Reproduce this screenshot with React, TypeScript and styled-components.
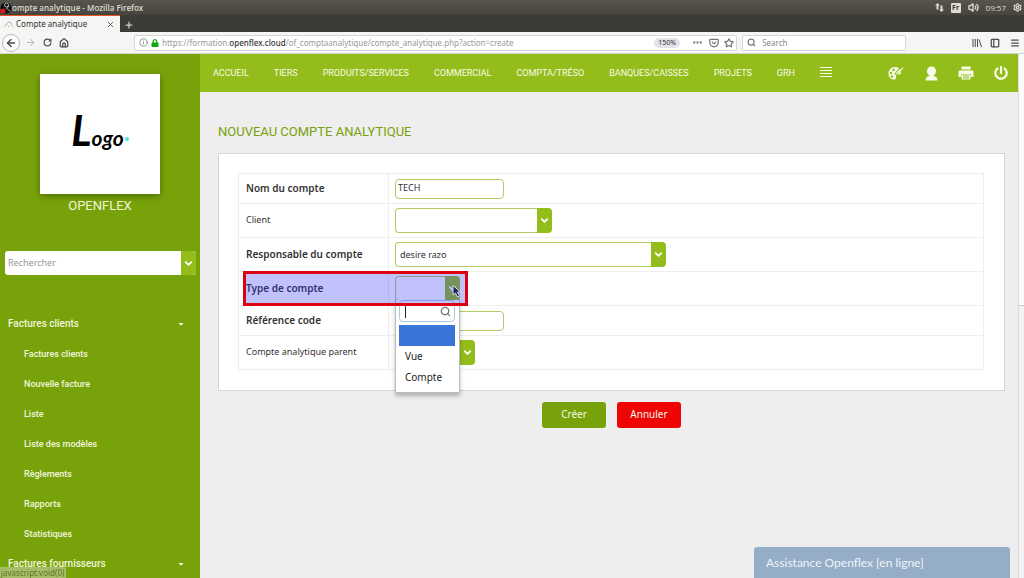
import React from 'react';
import styled, { createGlobalStyle } from 'styled-components';
import {
  ArrowLeft, ArrowRight, RotateCw, House, Info, Search, Star, Ellipsis, Menu, X, Plus, Volume2, PanelLeft, Settings, ChevronDown, Pocket,
} from 'lucide-react';
import { FaPowerOff, FaLock, FaCaretDown } from 'react-icons/fa';

const c = {
  side: '#78a20a',
  lime: '#93bd1a',
  line: '#eeeeee',
  border: '#b1cc66',
  page: '#eeeeee',
};
const ui = '"Noto Sans", "Open Sans", sans-serif';

const GlobalStyle = createGlobalStyle`
  *, *::before, *::after { box-sizing: border-box; }
  body { margin: 0; font: 10px/14px ${ui}; color: #333; overflow: hidden; }
  button, input, select { font: inherit; color: inherit; margin: 0; padding: 0; border: 0; background: none; min-width: 0; }
  a { color: inherit; text-decoration: none; }
  ul { list-style: none; margin: 0; padding: 0; }
  svg { flex: none; display: block; }
`;

const Window = styled.div`
  display: flex;
  flex-direction: column;
  height: 100vh;
`;

const TitleBar = styled.header`
  flex: none;
  display: flex;
  align-items: center;
  height: 15px;
  padding-right: 2px;
  background: linear-gradient(#57554c, #46443e);
  color: #dfdbd2;
  font: 600 8px/15px "Open Sans", sans-serif;
`;
const WindowTitle = styled.span`
  flex: 1;
`;
const Tray = styled.div`
  display: flex;
  align-items: center;
  gap: 7px;
  font-weight: normal;
`;
const KeyboardBadge = styled.span`
  width: 10px;
  background: #dfdbd2;
  border-radius: 1px;
  color: #3c3b37;
  font: bold 7px/10px ${ui};
  text-align: center;
`;

const TabBar = styled.div`
  flex: none;
  display: flex;
  align-items: flex-end;
  gap: 2px;
  height: 17px;
  background: #3c3b37;
  color: #d0cec8;
`;
const Tab = styled.div`
  display: flex;
  align-items: center;
  gap: 3px;
  width: 120px;
  height: 17px;
  padding: 0 5px 0 4px;
  border-top: 1px solid #e95420;
  background: #f5f5f4;
  color: #333;
  font-size: 8px;
`;
const TabTitle = styled.span`
  flex: 1;
`;
const IconButton = styled.button<{ $round?: boolean; $dim?: boolean }>`
  display: grid;
  place-items: center;
  flex: none;
  width: ${(p) => (p.$round ? 18 : 14)}px;
  height: ${(p) => (p.$round ? 18 : 14)}px;
  border: ${(p) => (p.$round ? '1px solid #b8b8b8' : '0')};
  border-radius: 50%;
  background: ${(p) => (p.$round ? '#fff' : 'none')};
  opacity: ${(p) => (p.$dim ? 0.4 : 1)};
`;

const Toolbar = styled.div`
  flex: none;
  display: flex;
  align-items: center;
  height: 22px;
  padding: 0 2px;
  background: #f5f5f4;
  border-bottom: 1px solid #d4d4d2;
  color: #4c4c4c;
`;
const NavButtons = styled.div`
  display: flex;
  align-items: center;
  gap: 3px;
  width: 132px;
`;
const Field = styled.div<{ $grow: number; $gap: number }>`
  flex: ${(p) => p.$grow} 1 0;
  display: flex;
  align-items: center;
  gap: ${(p) => p.$gap}px;
  height: 16px;
  padding: 0 2px 0 4px;
  margin-right: 5px;
  background: #fff;
  border: 1px solid #d6d6d4;
  border-radius: 2px;
  color: #777;
  font-size: 8px;
`;
const Url = styled.span`
  flex: 1;
  white-space: nowrap;
  color: #999;
  b { color: #333; font-weight: 500; }
`;
const ZoomBadge = styled.span`
  width: 26px;
  margin-right: 7px;
  border-radius: 5px;
  background: #e3e3e8;
  color: #333;
  font: 7px/10px ${ui};
  text-align: center;
`;
const BrowserSearch = styled.input`
  flex: 1;
  outline: 0;
  &::placeholder { color: #888; opacity: 1; }
`;
const ToolbarEnd = styled.div`
  display: flex;
  align-items: center;
  justify-content: flex-end;
  gap: 6px;
  width: 111px;
`;

const Page = styled.div`
  flex: 1;
  min-height: 0;
  display: flex;
  background: ${c.page};
`;
const Sidebar = styled.aside`
  flex: none;
  width: 200px;
  padding-top: 20px;
  background: ${c.side};
  color: #f0f6dc;
  font-family: Roboto, sans-serif;
  overflow: hidden;
`;
const LogoCard = styled.div`
  display: flex;
  align-items: center;
  justify-content: center;
  width: 120px;
  height: 120px;
  margin: 0 auto;
  background: #fff;
  box-shadow: 0 2px 7px rgba(0, 0, 0, 0.35);
`;
const LogoWord = styled.div`
  color: #000;
  font: italic 700 21px/44px Lato, sans-serif;
  &::first-letter { font-size: 42px; }
`;
const LogoDot = styled.span`
  width: 4px;
  height: 4px;
  margin: 10px 0 0 1px;
  border-radius: 50%;
  background: #4fe0ea;
`;
const Company = styled.div`
  margin-bottom: 35px;
  padding-top: 2px;
  font-size: 13px;
  line-height: 20px;
  text-align: center;
`;
const SideSearch = styled.form`
  display: flex;
  height: 24px;
  margin: 0 4px 0 5px;
  border-radius: 3px;
  background: #fff;
  overflow: hidden;
`;
const SideInput = styled.input`
  flex: 1;
  padding-left: 3px;
  outline: 0;
  color: #333;
  font: 9px/24px ${ui};
  &::placeholder { color: #999; opacity: 1; }
`;
const ArrowButton = styled.button`
  display: grid;
  place-items: center;
  flex: none;
  width: 15px;
  background: ${c.lime};
  color: #fff;
`;
const Menus = styled.nav`
  margin-top: 34px;
`;
const MenuHead = styled.button`
  display: flex;
  align-items: center;
  justify-content: space-between;
  width: 100%;
  height: 30px;
  padding: 0 15px 0 8px;
  font: 500 10px/30px Roboto, sans-serif;
`;
const MenuItem = styled.a`
  display: block;
  padding-left: 24px;
  font-size: 9px;
  font-weight: 500;
  line-height: 30px;
`;

const Main = styled.main`
  flex: 1;
  min-width: 0;
`;
const TopNav = styled.nav`
  display: flex;
  align-items: center;
  height: 38px;
  padding: 0 10px 0 13px;
  background: ${c.lime};
  color: #f7fbe9;
  font: 9px/38px Roboto, sans-serif;
`;
const NavLinks = styled.div`
  flex: 1;
  display: flex;
  align-items: center;
  gap: 25px;
  white-space: nowrap;
`;
const NavActions = styled.div`
  display: flex;
  align-items: center;
  gap: 20px;
`;
const PlainButton = styled.button`
  display: block;
`;
const Scrollbar = styled.div`
  flex: none;
  width: 6px;
  background: #f3f3f3;
  border-left: 1px solid #dcdcdc;
`;
const ScrollThumb = styled.div`
  height: 48%;
  background: #fbfbfb;
  border-bottom: 1px solid #ccc;
`;

const Content = styled.form`
  padding: 29px 13px 0 18px;
`;
const Title = styled.h1`
  margin: 0 0 11px;
  color: #78a20a;
  font: 13px/21px Roboto, sans-serif;
`;
const Panel = styled.section`
  padding: 19px 20px 20px 19px;
  background: #fff;
  border: 1px solid #d4d4d4;
`;
const FormTable = styled.table`
  width: 100%;
  border-collapse: collapse;
`;
const Row = styled.tr<{ $tall?: boolean }>`
  height: ${(p) => (p.$tall ? 34 : 30)}px;
`;
const LabelCell = styled.th<{ $bold?: boolean }>`
  position: relative;
  width: 150px;
  padding: 0 7px 2px;
  border: 1px solid ${c.line};
  font-size: ${(p) => (p.$bold ? 10 : 9)}px;
  font-weight: ${(p) => (p.$bold ? 600 : 400)};
  text-align: left;
  white-space: nowrap;
`;
const ValueCell = styled.td`
  padding: 0 6px;
  border: 1px solid ${c.line};
`;
const TextInput = styled.input`
  display: block;
  width: 109px;
  height: 20px;
  padding: 0 2px 2px;
  border: 1px solid ${c.border};
  border-radius: 4px;
  background: #fff;
  font-size: 9px;
`;
const SelectBox = styled.div<{ $width: number }>`
  position: relative;
  display: flex;
  width: ${(p) => p.$width}px;
  height: 25px;
`;
const NativeSelect = styled.select`
  flex: 1;
  appearance: none;
  padding: 0 4px;
  border: 1px solid ${c.border};
  border-right: 0;
  border-radius: 4px 0 0 4px;
  background: #fff;
  font-size: 9px;
`;
const SelectArrow = styled.span`
  display: grid;
  place-items: center;
  width: 15px;
  border-radius: 0 4px 4px 0;
  background: ${c.lime};
  color: #fff;
`;
const Highlight = styled.div`
  position: absolute;
  z-index: 3;
  left: 4px;
  top: -1px;
  width: 225px;
  height: 35px;
  border: 3px solid #dc0011;
  background: rgba(50, 50, 245, 0.3);
  pointer-events: none;
`;
const Pointer = styled.svg`
  position: absolute;
  z-index: 4;
  right: -1px;
  top: 9px;
`;
const Dropdown = styled.div`
  position: absolute;
  z-index: 2;
  left: 0;
  top: 24px;
  width: 65px;
  padding: 0 4px 4px 3px;
  border: 1px solid #bbb;
  border-top: 0;
  background: #fff;
  box-shadow: 0 3px 4px rgba(0, 0, 0, 0.25);
  color: #222;
`;
const DropSearch = styled.label`
  display: flex;
  align-items: center;
  height: 22px;
  margin-bottom: 3px;
  padding: 0 3px 0 5px;
  border: 1px solid #a9c9dd;
  border-radius: 4px;
  color: #777;
  input { width: 100%; height: 13px; border-left: 1px solid #222; outline: 0; }
`;
const DropOption = styled.li<{ $active?: boolean }>`
  height: 21px;
  padding-left: 6px;
  background: ${(p) => (p.$active ? '#3875d7' : 'transparent')};
  line-height: 21px;
`;
const Actions = styled.div`
  display: flex;
  justify-content: center;
  gap: 11px;
  margin-top: 11px;
`;
const ActionButton = styled.button<{ $danger?: boolean }>`
  width: 64px;
  height: 26px;
  padding-bottom: 2px;
  border-radius: 3px;
  background: ${(p) => (p.$danger ? '#ee0505' : c.side)};
  color: #f3f8e6;
`;
const ChatTab = styled.button`
  position: fixed;
  right: 14px;
  bottom: 0;
  width: 256px;
  height: 31px;
  padding-left: 12px;
  border-radius: 3px 3px 0 0;
  background: #95adc6;
  color: #f0f4f8;
  font: 12px/31px Lato, sans-serif;
  text-align: left;
`;
const StatusTip = styled.div`
  position: fixed;
  left: 0;
  bottom: 0;
  padding: 0 2px 0 1px;
  border-radius: 0 2px 0 0;
  background: #a5bd64;
  color: #5e7326;
  font: 8px/11px ${ui};
`;

const PaletteIcon = () => (
  <svg width="17" height="14" viewBox="0 0 34 28" fill="currentColor">
    <path fillRule="evenodd" d="M14 2C6 2 1 8 1 15c0 7 5 12 11 12 4 0 5-2 4-5-1-4 2-5 6-5 3 0 5-2 4-6l-7 6-6 1 2-6 7-7C20 3 17 2 14 2ZM11 5.500a2.500 2.500 0 1 0 0 5 2.500 2.500 0 0 0 0-5ZM6 11.500a2.500 2.500 0 1 0 0 5 2.500 2.500 0 0 0 0-5ZM8 18.500a2.500 2.500 0 1 0 0 5 2.500 2.500 0 0 0 0-5Z" />
    <path d="M33 1 21 9l-4 4-1 3 4-1 4-3Z" />
  </svg>
);
const PersonIcon = () => (
  <svg width="13" height="15" viewBox="0 0 26 30" fill="currentColor">
    <path d="M13 1c5 0 9 3 9 9 0 4-2 7-5 9v1c5 1 8 3 8 9H1c0-6 3-8 8-9v-1c-3-2-5-5-5-9 0-6 4-9 9-9Z" />
  </svg>
);
const PrinterIcon = () => (
  <svg width="16" height="14" viewBox="0 0 32 28" fill="currentColor">
    <path d="M7 1h18v6H7Z" />
    <path fillRule="evenodd" d="M4 9h24c2 0 3 1 3 3v10h-5v-6H6v6H1V12c0-2 1-3 3-3Z" />
    <path fillRule="evenodd" d="M7 17h18v10H7ZM10 19v2h12v-2ZM10 23v2h12v-2Z" />
  </svg>
);
const BarsIcon = () => (
  <svg width="12" height="12" viewBox="0 0 12 12" stroke="currentColor">
    <path d="M0 1.500h12M0 4.500h12M0 7.500h12M0 10.500h12" transform="translate(0 -1)" />
  </svg>
);
const NetworkIcon = () => (
  <svg width="9" height="9" viewBox="0 0 18 18" fill="currentColor">
    <path d="M5 0 0 5h3v8h4V5h3ZM13 18l5-5h-3V5h-4v8H8Z" />
  </svg>
);
const LibraryIcon = () => (
  <svg width="10" height="10" viewBox="0 0 20 20" fill="none" stroke="currentColor" strokeWidth="2">
    <path d="M2 2v16M6.500 2v16M11 2v16M14 3l5 15" />
  </svg>
);
const DesktopMark = () => (
  <svg width="12" height="14" viewBox="0 0 24 28">
    <circle cx="12" cy="14" r="11" fill="#111" />
    <circle cx="13" cy="8" r="4" fill="none" stroke="#ddd" strokeWidth="1.500" />
    <path d="m12 14 8 6M14 13l5-3" stroke="#ddd" strokeWidth="1.500" />
    <circle cx="6" cy="20" r="5" fill="#d8161b" />
  </svg>
);
const CloudIcon = () => (
  <svg width="9" height="8" viewBox="0 0 18 16" fill="none" stroke="#aaa" strokeWidth="2">
    <path d="M2 13c0-4 3-4 4-4 0-6 8-7 9 0l2 4" />
    <path d="M8 13h2" stroke="#d88" />
  </svg>
);
const Chevron = () => <ChevronDown size={11} strokeWidth={4} />;

const navLinks = ['ACCUEIL', 'TIERS', 'PRODUITS/SERVICES', 'COMMERCIAL', 'COMPTA/TRÉSO', 'BANQUES/CAISSES', 'PROJETS', 'GRH'];
const invoiceLinks = ['Factures clients', 'Nouvelle facture', 'Liste', 'Liste des modèles', 'Règlements', 'Rapports', 'Statistiques'];

interface SelectProps {
  id: string;
  width: number;
  value?: string;
  children?: React.ReactNode;
}
const Select = ({ id, width, value = '', children }: SelectProps) => (
  <SelectBox $width={width}>
    <NativeSelect id={id} defaultValue={value}>
      <option value={value}>{value}</option>
    </NativeSelect>
    <SelectArrow><Chevron /></SelectArrow>
    {children}
  </SelectBox>
);

interface FormRowProps {
  id: string;
  label: string;
  bold?: boolean;
  tall?: boolean;
  marked?: boolean;
  children: React.ReactNode;
}
const FormRow = ({ id, label, bold, tall, marked, children }: FormRowProps) => (
  <Row $tall={tall}>
    <LabelCell scope="row" $bold={bold}>
      <label htmlFor={id}>{label}</label>
      {marked && <Highlight />}
    </LabelCell>
    <ValueCell>{children}</ValueCell>
  </Row>
);

export default function App() {
  return (
    <Window>
      <GlobalStyle />
      <TitleBar>
        <DesktopMark />
        <WindowTitle>ompte analytique - Mozilla Firefox</WindowTitle>
        <Tray>
          <NetworkIcon />
          <KeyboardBadge>Fr</KeyboardBadge>
          <Volume2 size={11} strokeWidth={3} />
          <span>09:57</span>
          <Settings size={9} strokeWidth={3} />
        </Tray>
      </TitleBar>
      <TabBar>
        <Tab>
          <CloudIcon />
          <TabTitle>Compte analytique</TabTitle>
          <X size={9} />
        </Tab>
        <IconButton type="button" aria-label="Nouvel onglet"><Plus size={10} strokeWidth={3} /></IconButton>
      </TabBar>
      <Toolbar>
        <NavButtons>
          <IconButton type="button" $round aria-label="Précédent"><ArrowLeft size={12} strokeWidth={3} /></IconButton>
          <IconButton type="button" $dim aria-label="Suivant"><ArrowRight size={11} /></IconButton>
          <IconButton type="button" aria-label="Actualiser"><RotateCw size={9} strokeWidth={3} /></IconButton>
          <IconButton type="button" aria-label="Accueil"><House size={10} strokeWidth={3} /></IconButton>
        </NavButtons>
        <Field $grow={592} $gap={3}>
          <Info size={9} />
          <FaLock size={8} color="#12a812" />
          <Url>https://formation.<b>openflex.cloud</b>/of_comptaanalytique/compte_analytique.php?action=create</Url>
          <ZoomBadge>150%</ZoomBadge>
          <IconButton type="button" aria-label="Actions"><Ellipsis size={11} strokeWidth={3} /></IconButton>
          <IconButton type="button" aria-label="Pocket"><Pocket size={10} strokeWidth={3} /></IconButton>
          <Star size={10} strokeWidth={3} />
        </Field>
        <Field $grow={155} $gap={6}>
          <Search size={9} strokeWidth={3} />
          <BrowserSearch aria-label="Search" placeholder="Search" />
        </Field>
        <ToolbarEnd>
          <LibraryIcon />
          <IconButton type="button" aria-label="Panneau"><PanelLeft size={10} strokeWidth={3} /></IconButton>
          <IconButton type="button" aria-label="Menu"><Menu size={10} strokeWidth={3} /></IconButton>
        </ToolbarEnd>
      </Toolbar>
      <Page>
        <Sidebar>
          <LogoCard>
            <LogoWord>Logo</LogoWord>
            <LogoDot />
          </LogoCard>
          <Company>OPENFLEX</Company>
          <SideSearch>
            <SideInput aria-label="Rechercher" placeholder="Rechercher" />
            <ArrowButton type="button" aria-label="Options"><Chevron /></ArrowButton>
          </SideSearch>
          <Menus>
            <MenuHead type="button">Factures clients<FaCaretDown size={8} /></MenuHead>
            <ul>
              {invoiceLinks.map((t) => <li key={t}><MenuItem href="#">{t}</MenuItem></li>)}
            </ul>
            <MenuHead type="button">Factures fournisseurs<FaCaretDown size={8} /></MenuHead>
          </Menus>
        </Sidebar>
        <Main>
          <TopNav>
            <NavLinks>
              {navLinks.map((t) => <a key={t} href="#">{t}</a>)}
              <PlainButton type="button" aria-label="Plus"><BarsIcon /></PlainButton>
            </NavLinks>
            <NavActions>
              <PlainButton type="button" aria-label="Thème"><PaletteIcon /></PlainButton>
              <PlainButton type="button" aria-label="Profil"><PersonIcon /></PlainButton>
              <PlainButton type="button" aria-label="Imprimer"><PrinterIcon /></PlainButton>
              <PlainButton type="button" aria-label="Déconnexion"><FaPowerOff size={14} /></PlainButton>
            </NavActions>
          </TopNav>
          <Content>
            <Title>NOUVEAU COMPTE ANALYTIQUE</Title>
            <Panel>
              <FormTable>
                <tbody>
                  <FormRow id="nom" label="Nom du compte" bold><TextInput id="nom" defaultValue="TECH" /></FormRow>
                  <FormRow id="client" label="Client" tall><Select id="client" width={157} /></FormRow>
                  <FormRow id="resp" label="Responsable du compte" bold tall><Select id="resp" width={271} value="desire razo" /></FormRow>
                  <FormRow id="type" label="Type de compte" bold tall marked>
                    <Select id="type" width={65}>
                      <Dropdown>
                        <DropSearch><input aria-label="Filtrer" /><Search size={11} strokeWidth={3} /></DropSearch>
                        <ul>
                          <DropOption $active />
                          <DropOption>Vue</DropOption>
                          <DropOption>Compte</DropOption>
                        </ul>
                      </Dropdown>
                      <Pointer width="9" height="13" viewBox="0 0 18 26">
                        <path d="M2 1v19l5-4 4 8 4-2-4-8h6Z" fill="#20205a" stroke="#d8d8f8" strokeWidth="2" />
                      </Pointer>
                    </Select>
                  </FormRow>
                  <FormRow id="ref" label="Référence code" bold><TextInput id="ref" /></FormRow>
                  <FormRow id="parent" label="Compte analytique parent" tall><Select id="parent" width={80} /></FormRow>
                </tbody>
              </FormTable>
            </Panel>
            <Actions>
              <ActionButton type="button">Créer</ActionButton>
              <ActionButton type="button" $danger>Annuler</ActionButton>
            </Actions>
          </Content>
        </Main>
        <Scrollbar><ScrollThumb /></Scrollbar>
      </Page>
      <ChatTab type="button">Assistance Openflex [en ligne]</ChatTab>
      <StatusTip>javascript:void(0)</StatusTip>
    </Window>
  );
}
